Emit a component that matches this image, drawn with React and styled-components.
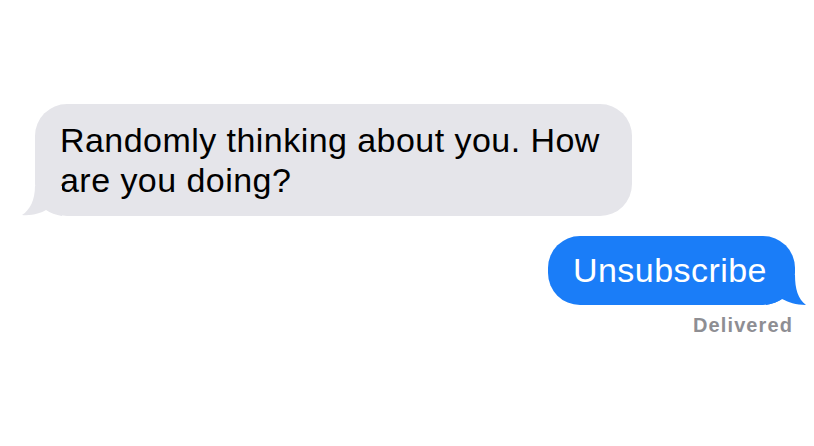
import React from "react";
import styled, { createGlobalStyle } from "styled-components";

const GlobalStyle = createGlobalStyle`
  html, body {
    margin: 0;
    padding: 0;
    background: #ffffff;
  }
  body {
    font-family: "Liberation Sans", Arial, sans-serif;
  }
`;

const Thread = styled.div`
  width: 814px;
  height: 446px;
  box-sizing: border-box;
  padding: 104px 19px 0 35px;
  display: flex;
  flex-direction: column;
`;

const Row = styled.div`
  display: flex;
  justify-content: ${(p) => (p.$sent ? "flex-end" : "flex-start")};
  margin-top: ${(p) => p.$gap || 0}px;
`;

const Bubble = styled.div`
  position: relative;
  box-sizing: border-box;
  background: ${(p) => (p.$sent ? "#1a7df8" : "#e5e5ea")};
  color: ${(p) => (p.$sent ? "#ffffff" : "#000000")};
  font-size: 34px;
  line-height: 40px;
  letter-spacing: 0.45px;
  border-radius: 32px;
  width: ${(p) => p.$width}px;
  height: ${(p) => p.$height}px;
  padding: ${(p) => p.$pad};
`;

const Tail = styled.svg`
  position: absolute;
  bottom: 0;
  ${(p) => (p.$right ? "right: -11px;" : "left: -13px;")}
`;

const Status = styled.div`
  text-align: right;
  margin-top: 9px;
  padding-right: 2px;
  font-size: 20px;
  font-weight: bold;
  letter-spacing: 1.1px;
  color: #8e8e93;
`;

export default function App() {
  return (
    <>
      <GlobalStyle />
      <Thread>
        <Row>
          <Bubble $width={597} $height={112} $pad="16px 20px 0 25px">
            Randomly thinking about you. How are you doing?
            <Tail width="40" height="30" viewBox="0 0 40 30">
              <path d="M13 0 C13 14 8 24 0 29 C10 30 19 27 24 24 C28 27 34 29 40 30 L40 0 Z" fill="#e5e5ea" />
            </Tail>
          </Bubble>
        </Row>
        <Row $sent $gap={20}>
          <Bubble $sent $width={247} $height={69} $pad="14px 0 0 25px">
            Unsubscribe
            <Tail $right width="40" height="30" viewBox="0 0 40 30">
              <path d="M29 0 C29 14 32 24 40 30 C30 30 22 27 16 24 C12 27 6 29 0 30 L0 0 Z" fill="#1a7df8" />
            </Tail>
          </Bubble>
        </Row>
        <Status>Delivered</Status>
      </Thread>
    </>
  );
}
